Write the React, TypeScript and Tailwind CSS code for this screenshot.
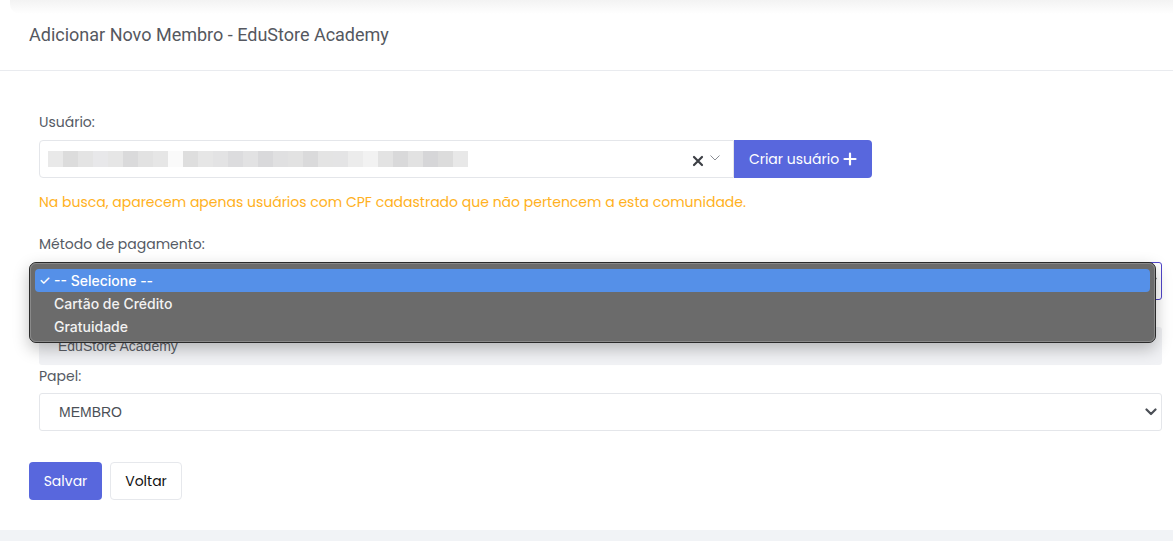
import React from "react";

const blur = [
  "#e9e9e9", "#dcdcdc", "#e4e4e4", "#e8e8ea", "#e6e6e6", "#dadadb", "#e2e2e2", "#e6e6e6",
  "#fafafa", "#dedede", "#e6e6e6", "#e3e3e4", "#dcdcde", "#e2e2e3", "#d9d9db", "#e0e0e1",
  "#e2e2e2", "#dadadb", "#e4e4e4", "#e4e4e5", "#ececec", "#f2f2f2", "#e3e3e3", "#d9d9da",
  "#e2e2e2", "#d6d6d8", "#dcdcdc", "#e8e8e8",
];

function Chevron({ className = "" }: { className?: string }) {
  return (
    <svg width="12" height="8" viewBox="0 0 12 8" className={className}>
      <path d="M1.5 1.5 L6 6 L10.5 1.5" fill="none" stroke="#4b4f56" strokeWidth="2.2" strokeLinecap="round" strokeLinejoin="round" />
    </svg>
  );
}

export default function App() {
  const label = "text-[14px] text-[#555a64] leading-[18px]";
  const poppins = { fontFamily: "Poppins, 'Open Sans', 'Noto Sans', sans-serif" };
  return (
    <div className="min-h-[541px] w-[1173px] bg-[#f1f3f6] flex flex-col" style={{ fontFamily: "'Open Sans', sans-serif" }}>
      <div className="bg-white">
        <div className="h-[14px] ml-[10px] bg-gradient-to-b from-[#f3f3f3] to-white rounded-bl-[10px]" />
        <div className="h-[57px] flex items-start px-[29px] border-b border-[#e9ebef]">
          <h1 className="text-[18px] text-[#555860] leading-[22px] mt-[10px]" style={{ fontFamily: "Roboto, sans-serif" }}>
            Adicionar Novo Membro - EduStore Academy
          </h1>
        </div>
        <div className="relative px-[29px] pt-[42px] pb-[30px]" style={poppins}>
          <div className="px-[10px]">
            <div className={label}>Usuário:</div>
            <div className="flex mt-[9px]">
              <div className="w-[695px] h-[38px] border border-[#e4e6ea] rounded-l-[4px] flex items-center pl-[8px] pr-[12px]">
                <div className="flex h-[16px]">
                  {blur.map((c, i) => (
                    <div key={i} className="w-[15px] h-[16px]" style={{ background: c }} />
                  ))}
                </div>
                <div className="flex-1" />
                <svg width="12" height="12" viewBox="0 0 12 12" className="mt-[3px]">
                  <path d="M2 2 L10 10 M10 2 L2 10" stroke="#3c3f45" strokeWidth="2.2" strokeLinecap="round" />
                </svg>
                <svg width="12" height="8" viewBox="0 0 12 8" className="ml-[5px] mb-[2px]">
                  <path d="M1.5 1.5 L6 6 L10.5 1.5" fill="none" stroke="#8a8d93" strokeWidth="1" />
                </svg>
              </div>
              <button className="h-[38px] w-[138px] bg-[#5867dd] text-white rounded-r-[4px] text-[14px] flex items-center justify-center gap-[4px]">
                Criar usuário
                <svg width="14" height="14" viewBox="0 0 14 14">
                  <path d="M7 1.5 V12.5 M1.5 7 H12.5" stroke="white" strokeWidth="2.2" strokeLinecap="round" />
                </svg>
              </button>
            </div>
            <div className="text-[14px] text-[#ffb122] mt-[15px] leading-[18px]">
              Na busca, aparecem apenas usuários com CPF cadastrado que não pertencem a esta comunidade.
            </div>

            <div className={label + " mt-[24px]"}>Método de pagamento:</div>
            <div className="mt-[9px] h-[38px] w-[1123px] border border-[#5045c9] rounded-[3px] flex items-center justify-end pr-[4px]">
              <Chevron />
            </div>

            <div className="h-[27px]" />
            <div className="h-[38px] w-[1123px] bg-[#f1f2f5] rounded-[3px] flex items-center pl-[19px] text-[14px] text-[#5b5e66]" style={{ fontFamily: "'Liberation Sans', Arial, sans-serif" }}>
              EduStore Academy
            </div>

            <div className={label + " mt-[2px]"}>Papel:</div>
            <div className="mt-[8px] h-[38px] w-[1123px] border border-[#e4e6ea] rounded-[3px] flex items-center pl-[19px] pr-[4px] text-[14px] text-[#4b4f56]" style={{ fontFamily: "'Liberation Sans', Arial, sans-serif" }}>
              <span className="flex-1">MEMBRO</span>
              <Chevron />
            </div>
          </div>

          <div className="flex gap-[8px] mt-[31px]">
            <button className="h-[38px] w-[73px] bg-[#5867dd] text-white text-[14px] rounded-[4px]">Salvar</button>
            <button className="h-[38px] w-[72px] bg-white border border-[#e6e8ec] text-[#111] text-[14px] rounded-[4px]">Voltar</button>
          </div>

          <div
            className="absolute left-[29px] top-[191px] w-[1127px] h-[81px] bg-[#6b6b6b] rounded-[7px] border border-[#2a2a2a] shadow-[0_6px_16px_rgba(0,0,0,0.25)] px-[5px] pt-[6px]"
            style={{ fontFamily: "Inter, 'Liberation Sans', Arial, sans-serif" }}
          >
            <div className="absolute inset-0 rounded-[6px] border border-[#8a8a8a] pointer-events-none" />
            <div className="h-[23px] bg-[#5590e8] rounded-[4px] flex items-center text-white text-[14px] font-medium">
              <span className="w-[19px] pl-[4px] text-[13px]">✓</span>
              <span>-- Selecione --</span>
            </div>
            <div className="h-[23px] flex items-center text-[#f2f2f2] text-[14px] font-medium pl-[19px]">Cartão de Crédito</div>
            <div className="h-[23px] flex items-center text-[#f2f2f2] text-[14px] font-medium pl-[19px]">Gratuidade</div>
          </div>
        </div>
      </div>
    </div>
  );
}
